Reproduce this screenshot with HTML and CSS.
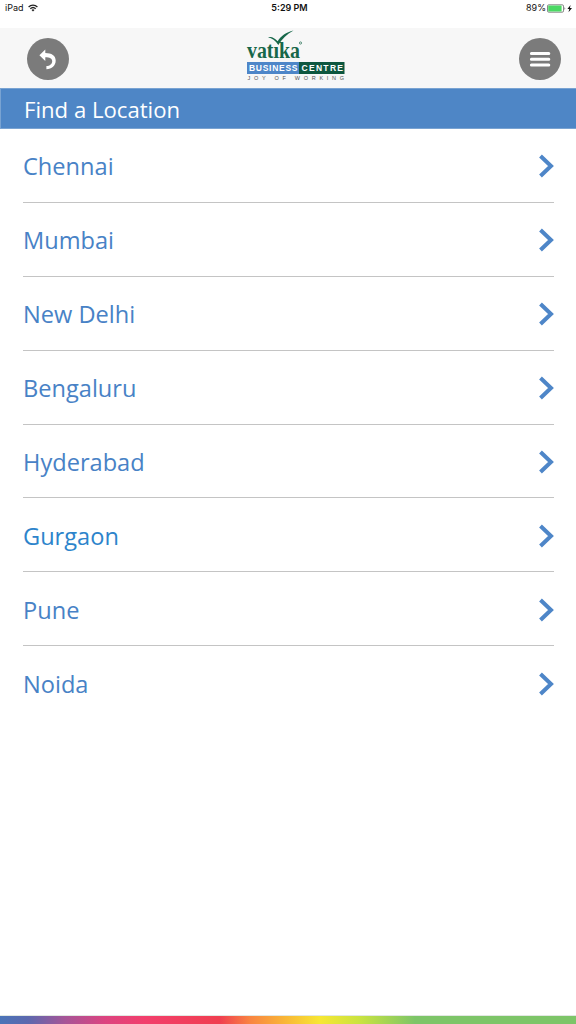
FILE: index.html
```html
<!DOCTYPE html>
<html lang="en">
<head>
<meta charset="utf-8">
<title>Find a Location</title>
<link rel="stylesheet" href="styles.css">
</head>
<body>
<div class="screen">
  <div class="status">
    <div class="status-left"><span>iPad</span>
      <svg class="wifi" viewBox="0 0 10 8" fill="none" stroke="#222" stroke-width="1.3"><path d="M.6 3a6.3 6.3 0 0 1 8.8 0M2.3 4.8a3.9 3.9 0 0 1 5.4 0"/><path d="M3.5 6 5 7.6 6.5 6a2.2 2.2 0 0 0-3 0z" fill="#222" stroke="none"/></svg>
    </div>
    <span class="time">5:29 PM</span>
    <div class="status-right"><span>89%</span>
      <svg class="battery" viewBox="0 0 27 9"><rect x=".5" y=".8" width="16" height="7.4" rx="1.3" fill="#fff" stroke="#555" stroke-width=".7"/><rect x="1.2" y="1.5" width="13.4" height="6" rx=".5" fill="#4bd964"/><path d="M17.6 3.1q1.3 1.4 0 2.8z" fill="#333"/><path d="M23.6.9 20.400 5h1.900l-.8 3.300 3.500-4.400h-2.100z" fill="#111"/></svg>
    </div>
  </div>
  <header class="header">
    <button class="round" aria-label="Back"><svg viewBox="0 0 42 42"><path d="M12.400 17.200 18.300 11.600v3.300c6.300.1 10.400 2.500 10.400 7.700 0 5.300-3.900 8.500-9.300 8.700v-3.200c3.500-.3 5.800-2.200 5.800-4.900 0-2.600-2.400-3.900-6.900-3.900v3.600z" fill="#fff"/></svg></button>
    <svg class="logo" viewBox="0 0 108 54" role="img" aria-label="Vatika Business Centre">
      <text class="logo-name" x="6" y="28.500" textLength="53" lengthAdjust="spacingAndGlyphs">vatıka</text>
      <path d="M27 8.300c4-1 6.500 1 9.700 3.900C40 7 45 3.600 52.500 1.600 45.500 5.500 41 10.300 37.300 15.900 34.500 12 31 9 27 8.300z" fill="#17674a"/>
      <circle cx="59.500" cy="14" r="1.100" fill="none" stroke="#17674a" stroke-width=".7"/>
      <rect x="6" y="33" width="52" height="12" fill="#4e86c8"/>
      <rect x="58" y="33" width="45.500" height="12" fill="#0e573f"/>
      <text class="logo-band" x="8" y="42.200" textLength="48.500">BUSINESS</text>
      <text class="logo-band" x="60.500" y="42.200" textLength="41.500">CENTRE</text>
      <text class="logo-tag" x="6.500" y="50.500" textLength="96.500">JOY OF WORKING</text>
    </svg>
    <button class="round" aria-label="Menu"><svg viewBox="0 0 42 42"><path d="M12.400 15.500h17.400M12.400 21.300h17.400M12.400 27h17.400" stroke="#fff" stroke-width="3" stroke-linecap="round"/></svg></button>
  </header>
  <h1 class="title">Find a Location</h1>
  <ul class="list">
    <li class="row"><span>Chennai</span><svg class="chevron" viewBox="0 0 16 24"><path d="m2.500 2 10.500 10-10.500 10"/></svg></li>
    <li class="row"><span>Mumbai</span><svg class="chevron" viewBox="0 0 16 24"><path d="m2.500 2 10.500 10-10.500 10"/></svg></li>
    <li class="row"><span>New Delhi</span><svg class="chevron" viewBox="0 0 16 24"><path d="m2.500 2 10.500 10-10.500 10"/></svg></li>
    <li class="row"><span>Bengaluru</span><svg class="chevron" viewBox="0 0 16 24"><path d="m2.500 2 10.500 10-10.500 10"/></svg></li>
    <li class="row"><span>Hyderabad</span><svg class="chevron" viewBox="0 0 16 24"><path d="m2.500 2 10.500 10-10.500 10"/></svg></li>
    <li class="row active"><span>Gurgaon</span><svg class="chevron" viewBox="0 0 16 24"><path d="m2.500 2 10.500 10-10.500 10"/></svg></li>
    <li class="row"><span>Pune</span><svg class="chevron" viewBox="0 0 16 24"><path d="m2.500 2 10.500 10-10.500 10"/></svg></li>
    <li class="row"><span>Noida</span><svg class="chevron" viewBox="0 0 16 24"><path d="m2.500 2 10.500 10-10.500 10"/></svg></li>
  </ul>
  <div class="rainbow"></div>
</div>
</body>
</html>
```
FILE: styles.css
```css
* { box-sizing: border-box; }
body { margin: 0; background: #fff; }
.screen {
  width: 576px;
  height: 1024px;
  display: flex;
  flex-direction: column;
  overflow: hidden;
  font-family: "Open Sans", sans-serif;
}
.status {
  height: 28px;
  padding: 2px 2px 0 5px;
  display: grid;
  grid-template-columns: 1fr auto 1fr;
  align-items: start;
  font: 9px/12px Inter, sans-serif;
  color: #111;
}
.status-left, .status-right { display: flex; align-items: center; }
.status-left { gap: 4px; }
.status-right { justify-content: flex-end; gap: 1px; }
.time { font-weight: 600; }
.wifi { width: 10px; height: 8px; }
.battery { width: 27px; height: 9px; }
.header {
  height: 60px;
  padding: 2px 15px 0 27px;
  display: flex;
  justify-content: space-between;
  align-items: center;
  background: #f7f7f7;
}
.round {
  width: 42px;
  height: 42px;
  padding: 0;
  border: 0;
  border-radius: 50%;
  background: #7b7b7b;
}
.round svg { display: block; width: 42px; height: 42px; }
.logo { width: 108px; height: 54px; margin: -6px 0 0 1px; }
.logo-name { font: bold 24px "Liberation Serif", serif; fill: #17674a; }
.logo-band { font: bold 8.500px "Liberation Sans", sans-serif; fill: #fff; }
.logo-tag { font: 5.500px "Liberation Sans", sans-serif; fill: #555; }
.title {
  height: 41px;
  margin: 0;
  padding-left: 23px;
  border-top: 1px solid #79a3d2;
  border-bottom: 1px solid #79a3d2;
  border-left: 1px solid #79a3d2;
  background: #4e86c6;
  color: #fff;
  font-size: 22.150px;
  font-weight: 400;
  line-height: 40px;
}
.list {
  flex: 1;
  margin: 0;
  padding: 0 22px 0 23px;
  list-style: none;
}
.row {
  height: 73.900px;
  padding-top: 2px;
  display: flex;
  justify-content: space-between;
  align-items: center;
  border-bottom: 1px solid #c4c4c4;
  color: #4882c6;
  font-size: 23.600px;
}
.row:last-child { border-bottom: 0; }
.active { color: #2d84cb; }
.chevron {
  width: 16px;
  height: 24px;
  fill: none;
  stroke: #4e86c8;
  stroke-width: 4;
}
.rainbow {
  height: 9px;
  border-top: 1px solid #e2e8e2;
  background: linear-gradient(90deg, #4a74b8 0, #5c68ae 28px, #a65597 65px, #dc4480 105px, #f23f6c 145px, #f03f50 220px, #f98442 250px, #f9b637 285px, #f7e733 320px, #c9e340 360px, #7dc568 415px, #7dc568 100%);
}
```
